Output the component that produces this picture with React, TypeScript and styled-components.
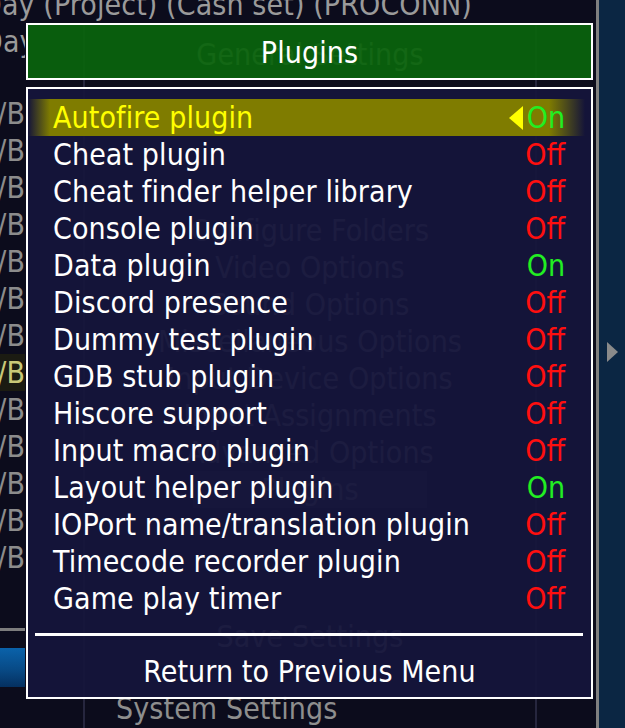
import React from 'react'
import styled, {createGlobalStyle} from "styled-components";

const GlobalStyle = createGlobalStyle`
  html, body {
    margin: 0;
    padding: 0;
    background: #0c0c1c;
  }
  body {
    font-family: "DejaVu Sans Condensed", "DejaVu Sans", sans-serif;
  }
`

const plugins = [
    {name: "Autofire plugin", on: true},
    {name: "Cheat plugin", on: false},
    {name: "Cheat finder helper library", on: false},
    {name: "Console plugin", on: false},
    {name: "Data plugin", on: true},
    {name: "Discord presence", on: false},
    {name: "Dummy test plugin", on: false},
    {name: "GDB stub plugin", on: false},
    {name: "Hiscore support", on: false},
    {name: "Input macro plugin", on: false},
    {name: "Layout helper plugin", on: true},
    {name: "IOPort name/translation plugin", on: false},
    {name: "Timecode recorder plugin", on: false},
    {name: "Game play timer", on: false},
]

const backItems = [
    "Configure Folders",
    "Video Options",
    "Sound Options",
    "Miscellaneous Options",
    "Input Device Options",
    "Input Assignments",
    "Advanced Options",
    "Plugins",
]

const S = {
    Screen: styled.div`
      position: relative;
      width: 625px;
      height: 728px;
      display: flex;
      overflow: hidden;
      font-size: 30px;
      letter-spacing: 0.1px;
      line-height: 37px;
    `,
    LeftArea: styled.div`
      width: 596px;
      height: 728px;
      display: flex;
      flex-direction: column;
      background: #0c0c1c;
      overflow: hidden;
    `,
    TopLine: styled.div`
      margin-top: -14px;
      height: 37px;
      white-space: nowrap;
      text-indent: -19px;
      color: #9a9a9a;
    `,
    Body: styled.div`
      flex: 1;
      display: flex;
    `,
    GameList: styled.div`
      width: 25px;
      flex-shrink: 0;
      display: flex;
      flex-direction: column;
      overflow: hidden;
    `,
    GameTitle: styled.div`
      height: 37px;
      white-space: nowrap;
      text-indent: -18px;
      color: #9a9a9a;
      margin-bottom: 35px;
    `,
    GameItem: styled.div<{ $current?: boolean }>`
      height: 37px;
      display: flex;
      justify-content: flex-end;
      white-space: nowrap;
      color: ${p => p.$current ? "#c8c878" : "#8c8c8c"};
      background: ${p => p.$current ? "#1b1b12" : "transparent"};
    `,
    GrayRule: styled.div`
      margin-top: 52px;
      height: 3px;
      background: #7d7d7d;
    `,
    BlueBar: styled.div`
      margin-top: 17px;
      height: 39px;
      background: linear-gradient(180deg, #0a62aa 0%, #084a86 55%, #053060 100%);
    `,
    MenuBox: styled.div`
      margin-left: 58px;
      width: 450px;
      display: flex;
      flex-direction: column;
      align-items: center;
      border-left: 2px solid #26263e;
      border-right: 2px solid #26263e;
      color: #8a8a8a;
    `,
    MenuHeading: styled.div`
      margin-top: 13px;
      height: 37px;
    `,
    MenuList: styled.div`
      margin-top: 139px;
      align-self: stretch;
      display: flex;
      flex-direction: column;
      align-items: center;
    `,
    MenuItem: styled.div<{ $selected?: boolean }>`
      height: 37px;
      align-self: stretch;
      margin: 0 ${p => p.$selected ? "108px" : "0"};
      text-align: center;
      background: ${p => p.$selected ? "#2a2a3a" : "transparent"};
    `,
    SaveItem: styled.div`
      margin-top: 110px;
      height: 37px;
    `,
    SystemItem: styled.div`
      margin-top: 35px;
      align-self: flex-start;
      margin-left: 31px;
      height: 37px;
      color: #8e8e8e;
    `,
    Divider: styled.div`
      width: 3px;
      flex-shrink: 0;
      background: #808080;
    `,
    RightPanel: styled.div`
      flex: 1;
      background: #0b2643;
      display: flex;
      flex-direction: column;
    `,
    SideArrow: styled.div`
      margin-top: 342px;
      margin-left: 8px;
      width: 0;
      height: 0;
      border-left: 11px solid #8a8a8a;
      border-top: 10px solid transparent;
      border-bottom: 10px solid transparent;
    `,
    Dialog: styled.div`
      position: absolute;
      top: 23px;
      left: 26px;
      width: 567px;
      display: flex;
      flex-direction: column;
      gap: 7px;
    `,
    TitleBox: styled.div`
      height: 57px;
      padding-top: 2px;
      box-sizing: border-box;
      border: 2px solid #ffffff;
      background: rgba(10, 100, 12, 0.93);
      color: #ffffff;
      display: flex;
      align-items: center;
      justify-content: center;
    `,
    MainBox: styled.div`
      border: 2px solid #ffffff;
      background: rgba(21, 21, 60, 0.94);
      padding: 10px 0 7px;
      display: flex;
      flex-direction: column;
    `,
    Row: styled.div<{ $selected?: boolean }>`
      height: 37px;
      display: flex;
      align-items: center;
      justify-content: space-between;
      padding: 0 26px 0 25px;
      white-space: nowrap;
      color: ${p => p.$selected ? "#ffff00" : "#ffffff"};
      background: ${p => p.$selected
              ? "linear-gradient(90deg, rgba(127,124,0,0) 0px, #7f7c00 22px, #7f7c00 calc(100% - 42px), rgba(127,124,0,0) calc(100% - 6px))"
              : "transparent"};
    `,
    ValueGroup: styled.span`
      display: flex;
      align-items: center;
    `,
    Value: styled.span<{ $on: boolean }>`
      color: ${p => p.$on ? "#22ee22" : "#ff0f0f"};
      letter-spacing: 0;
    `,
    SelArrow: styled.span`
      width: 0;
      height: 0;
      margin-right: 4px;
      border-right: 14px solid #ffff00;
      border-top: 12px solid transparent;
      border-bottom: 12px solid transparent;
    `,
    Separator: styled.div`
      margin: 16px 8px 0 7px;
      height: 3px;
      background: #ffffff;
    `,
    ReturnRow: styled.div`
      margin-top: 17px;
      height: 37px;
      text-align: center;
      color: #ffffff;
    `,
}

function App() {
    const gameRows = Array.from({length: 13}, (_, i) => i)

    return (
        <>
            <GlobalStyle/>
            <S.Screen>
                <S.LeftArea>
                    <S.TopLine>Day (Project) (Cash set) (PROCONN)</S.TopLine>
                    <S.Body>
                        <S.GameList>
                            <S.GameTitle>Day (Project)</S.GameTitle>
                            {gameRows.map(i => (
                                <S.GameItem key={i} $current={i === 7}>/B</S.GameItem>
                            ))}
                            <S.GrayRule/>
                            <S.BlueBar/>
                        </S.GameList>
                        <S.MenuBox>
                            <S.MenuHeading>General Settings</S.MenuHeading>
                            <S.MenuList>
                                {backItems.map(item => (
                                    <S.MenuItem key={item} $selected={item === "Plugins"}>{item}</S.MenuItem>
                                ))}
                            </S.MenuList>
                            <S.SaveItem>Save Settings</S.SaveItem>
                            <S.SystemItem>System Settings</S.SystemItem>
                        </S.MenuBox>
                    </S.Body>
                </S.LeftArea>
                <S.Divider/>
                <S.RightPanel>
                    <S.SideArrow/>
                </S.RightPanel>

                <S.Dialog>
                    <S.TitleBox>Plugins</S.TitleBox>
                    <S.MainBox>
                        {plugins.map((plugin, index) => (
                            <S.Row key={plugin.name} $selected={index === 0}>
                                <span>{plugin.name}</span>
                                <S.ValueGroup>
                                    {index === 0 && <S.SelArrow/>}
                                    <S.Value $on={plugin.on}>{plugin.on ? "On" : "Off"}</S.Value>
                                </S.ValueGroup>
                            </S.Row>
                        ))}
                        <S.Separator/>
                        <S.ReturnRow>Return to Previous Menu</S.ReturnRow>
                    </S.MainBox>
                </S.Dialog>
            </S.Screen>
        </>
    )
}

export default App;
